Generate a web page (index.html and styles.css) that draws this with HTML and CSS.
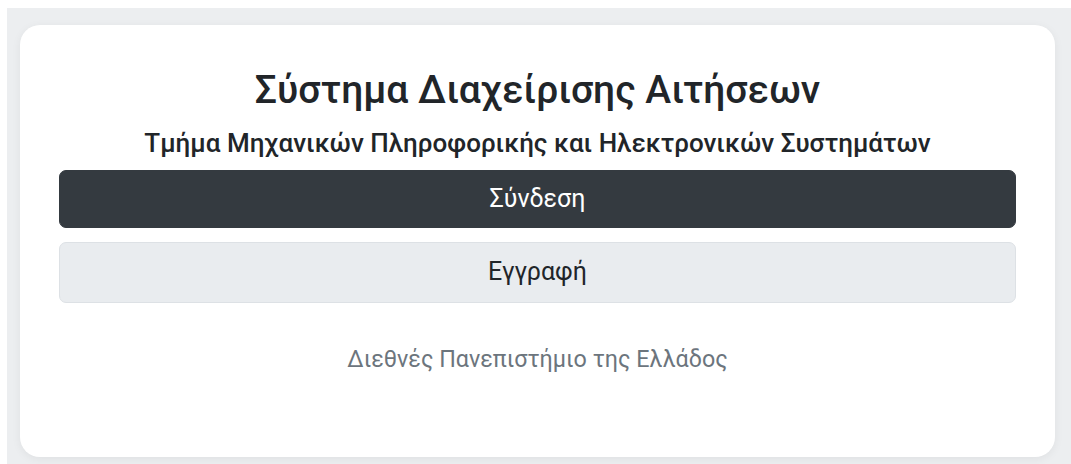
FILE: index.html
```html
<!DOCTYPE html>
<html lang="el">
<head>
<meta charset="utf-8">
<title>Σύστημα Διαχείρισης Αιτήσεων</title>
<link rel="stylesheet" href="styles.css">
</head>
<body>
<div class="page">
  <main class="card">
    <h1 class="title">Σύστημα Διαχείρισης Αιτήσεων</h1>
    <h2 class="subtitle">Τμήμα Μηχανικών Πληροφορικής και Ηλεκτρονικών Συστημάτων</h2>
    <div class="actions">
      <a class="btn btn-dark" href="#">Σύνδεση</a>
      <a class="btn btn-light" href="#">Εγγραφή</a>
    </div>
    <p class="footer">Διεθνές Πανεπιστήμιο της Ελλάδος</p>
  </main>
</div>
</body>
</html>
```

FILE: styles.css
```css
html, body {
  margin: 0;
  padding: 0;
  background: #ffffff;
}

body {
  padding: 8px 0 0 7px;
  font-family: Roboto, "Noto Sans", "Liberation Sans", sans-serif;
  color: #212529;
  overflow: hidden;
}

.page {
  background: #eceef0;
  padding: 17px 16px 20px 13px;
}

.card {
  background: #ffffff;
  border-radius: 20px;
  box-shadow: 0 2px 10px rgba(0, 0, 0, 0.06);
  padding: 43px 39px 83px;
  display: flex;
  flex-direction: column;
  align-items: stretch;
  text-align: center;
}

.title {
  margin: 0;
  font-size: 39px;
  font-weight: 500;
  line-height: 44px;
}

.subtitle {
  margin: 16px 0 0;
  font-size: 26px;
  font-weight: 500;
  line-height: 30px;
}

.actions {
  margin-top: 12px;
  display: flex;
  flex-direction: column;
  gap: 14px;
}

.btn {
  display: block;
  text-decoration: none;
  font-size: 25px;
  line-height: 30px;
  padding: 13px 16px;
  border-radius: 7px;
  border: 1px solid transparent;
}

.btn-dark {
  background: #343a40;
  border-color: #343a40;
  color: #ffffff;
}

.btn-light {
  background: #e9ecef;
  border-color: #dde1e5;
  color: #212529;
  padding: 14px 16px 15px;
}

.footer {
  margin: 41px 0 0;
  font-size: 23.3px;
  line-height: 30px;
  color: #6c757d;
}
```
